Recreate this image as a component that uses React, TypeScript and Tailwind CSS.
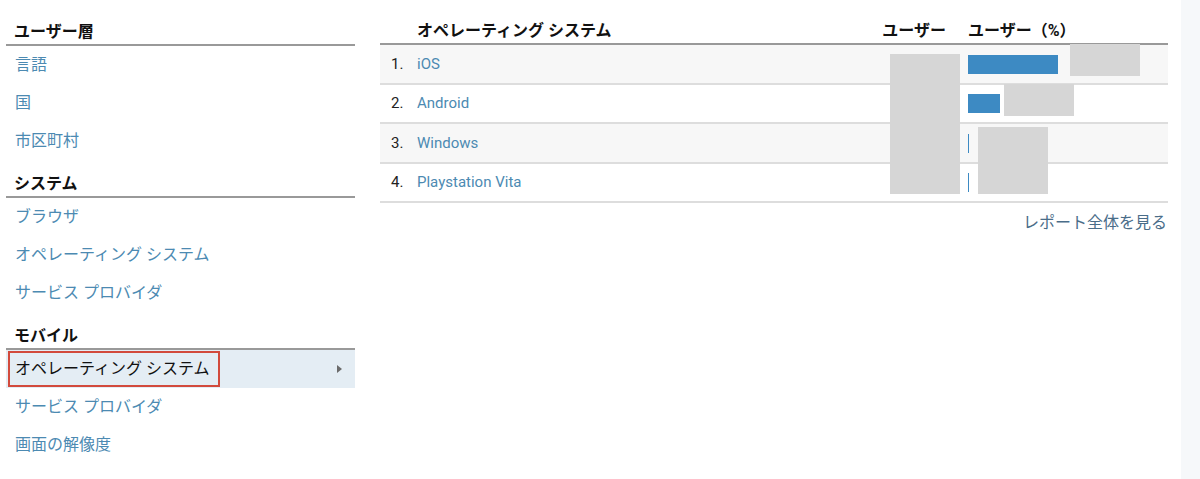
import React from "react";

const FONT = { fontFamily: 'Roboto, "Noto Sans CJK JP", "Noto Sans", sans-serif' };

type Item = { label: string; active?: boolean };
type Section = { title: string; items: Item[] };

const sections: Section[] = [
  { title: "ユーザー層", items: [{ label: "言語" }, { label: "国" }, { label: "市区町村" }] },
  {
    title: "システム",
    items: [{ label: "ブラウザ" }, { label: "オペレーティング システム" }, { label: "サービス プロバイダ" }],
  },
  {
    title: "モバイル",
    items: [
      { label: "オペレーティング システム", active: true },
      { label: "サービス プロバイダ" },
      { label: "画面の解像度" },
    ],
  },
];

const rows = [
  { n: "1.", name: "iOS", bar: 90, h: "h-[40px]" },
  { n: "2.", name: "Android", bar: 32, h: "h-[39px]" },
  { n: "3.", name: "Windows", bar: 1, h: "h-[40px]" },
  { n: "4.", name: "Playstation Vita", bar: 1, h: "h-[39px]" },
];

export default function App() {
  return (
    <div className="flex w-[1200px] h-[479px] bg-white overflow-hidden" style={FONT}>
      {/* Left nav */}
      <div className="ml-[6px] mt-[8px] w-[349px] flex flex-col">
        {sections.map((s) => (
          <div key={s.title}>
            <div className="h-[38px] flex items-end pb-[2px] pl-[8px] border-b-2 border-[#999999] text-[16px] font-bold text-[#111111] leading-[20px]">
              {s.title}
            </div>
            {s.items.map((it, i) =>
              it.active ? (
                <div key={i} className="h-[38px] flex items-center bg-[#e4edf4] relative">
                  <div className="ml-[2px] h-[36px] flex items-center pl-[5px] pr-[8px] border-2 border-[#d24a3c] text-[16px] text-[#111111]">
                    {it.label}
                  </div>
                  <div className="absolute right-[13px] top-[15px] w-0 h-0 border-y-[4px] border-y-transparent border-l-[5px] border-l-[#6b6b6b]" />
                </div>
              ) : (
                <div key={i} className="h-[38px] flex items-center pl-[9px] text-[16px] text-[#4c8ab2]">
                  {it.label}
                </div>
              )
            )}
          </div>
        ))}
      </div>

      {/* Table */}
      <div className="ml-[25px] mt-[7px] w-[788px] flex flex-col">
        <div className="relative">
          <div className="h-[38px] flex items-end border-b-2 border-[#999999] text-[16px] font-bold text-[#111111] leading-[20px] pb-[2px]">
            <div className="w-[37px]" />
            <div className="flex-1">オペレーティング システム</div>
            <div className="w-[88px] pr-[12px] text-right">ユーザー</div>
            <div className="w-[210px] pl-[10px]">ユーザー（%）</div>
          </div>
          {rows.map((r, i) => (
            <div
              key={r.n}
              className={`${r.h} flex items-center border-b-2 border-[#dddddd] text-[15px] ${i % 2 === 0 ? "bg-[#f7f7f7]" : "bg-white"}`}
            >
              <div className="w-[37px] pl-[11px] text-[#222222]">{r.n}</div>
              <div className="flex-1 text-[#4c8ab2]">{r.name}</div>
              <div className="w-[88px]" />
              <div className="w-[210px] pl-[10px] flex items-center">
                <div className="h-[19px] bg-[#3d8ac3]" style={{ width: `${r.bar}px` }} />
              </div>
            </div>
          ))}
          {/* redaction boxes */}
          <div className="absolute left-[510px] top-[47px] w-[70px] h-[140px] bg-[#d6d6d6]" />
          <div className="absolute left-[690px] top-[37px] w-[70px] h-[32px] bg-[#d6d6d6]" />
          <div className="absolute left-[624px] top-[77px] w-[70px] h-[32px] bg-[#d6d6d6]" />
          <div className="absolute left-[598px] top-[120px] w-[70px] h-[67px] bg-[#d6d6d6]" />
        </div>
        <div className="mt-[8px] text-right text-[16px] text-[#4a6d89] pr-[1px]">レポート全体を見る</div>
      </div>

      <div className="flex-1" />
      <div className="w-[19px] h-full bg-[#f6f8fa]" />
    </div>
  );
}
